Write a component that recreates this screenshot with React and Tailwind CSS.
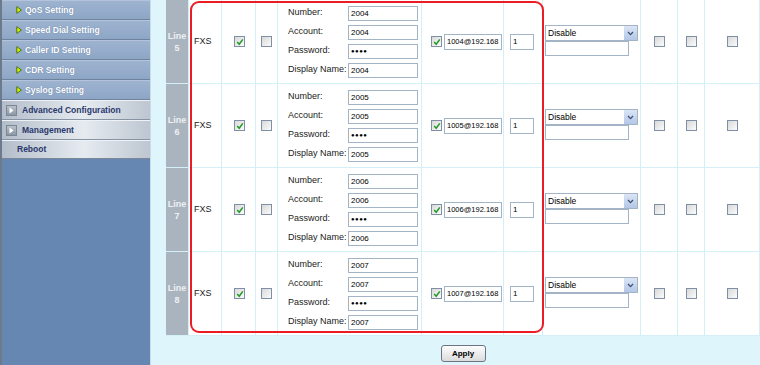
import React from 'react';

const subItems = ['QoS Setting', 'Speed Dial Setting', 'Caller ID Setting', 'CDR Setting', 'Syslog Setting'];
const lines = [5, 6, 7, 8];

function Bullet() {
  return (
    <svg width="6" height="8" viewBox="0 0 6 8" className="shrink-0">
      <path d="M0.8 0.6 L5.4 4 L0.8 7.4 Z" fill="#d6f000" stroke="#3f6b12" strokeWidth="0.9" />
    </svg>
  );
}

function FolderIcon() {
  return (
    <span className="flex h-[11px] w-[11px] shrink-0 items-center justify-center border border-[#7c8796] bg-gradient-to-b from-[#b9c1cb] to-[#8d97a4]">
      <svg width="5" height="7" viewBox="0 0 5 7">
        <path d="M0.5 0.5 L4.5 3.5 L0.5 6.5 Z" fill="#ffffff" />
      </svg>
    </span>
  );
}

function Box({ checked }) {
  return (
    <span className="flex h-[11px] w-[11px] items-center justify-center border border-[#7e8fa6] bg-gradient-to-br from-[#d9d9d9] to-[#fbfbfb]">
      {checked && (
        <svg width="8" height="8" viewBox="0 0 8 8">
          <path d="M1.2 4 L3.2 6.2 L6.8 1.4" fill="none" stroke="#1f9a22" strokeWidth="1.5" />
        </svg>
      )}
    </span>
  );
}

// plain read-only text box, password shown as dots
function Field({ value, w, h = 'h-[15px]', size = 'text-[8px]' }) {
  return (
    <input
      readOnly
      type="text"
      value={value}
      className={`${w} ${h} ${size} border border-[#a3b4c7] bg-white px-[2px] font-['Liberation_Sans',Arial,sans-serif] text-black outline-none`}
    />
  );
}

function Row({ n }) {
  const num = String(1999 + n);
  return (
    <div className="flex h-[84px] border-b border-[#d3eff8] bg-white">
      <div className="flex w-[23px] shrink-0 flex-col items-center justify-center border-r border-[#d3eff8] bg-[#aab4be] text-[9px] font-bold leading-[12px] text-[#eef1f4]">
        <span>Line</span>
        <span>{n}</span>
      </div>
      <div className="flex w-[33px] shrink-0 items-center border-r border-[#d3eff8] pl-[5px] text-[9px] text-[#222]">FXS</div>
      <div className="flex w-[34px] shrink-0 items-center justify-center border-r border-[#d3eff8] pl-[2px]">
        <Box checked />
      </div>
      <div className="flex w-[22px] shrink-0 items-center justify-center border-r border-[#d3eff8]">
        <Box />
      </div>
      <div className="flex w-[144px] shrink-0 flex-col justify-center gap-[4px] border-r border-[#d3eff8] pl-[10px] text-[9px] text-[#222]">
        {[
          ['Number:', num],
          ['Account:', num],
          ['Password:', '●●●●'],
          ['Display Name:', num],
        ].map(([label, value]) => (
          <div key={label} className="flex h-[15px] items-center">
            <span className="w-[60px] shrink-0 whitespace-nowrap">{label}</span>
            {label === 'Password:' ? (
              <Field value={value} w="w-[70px]" size="text-[6px] tracking-[0.5px]" />
            ) : (
              <Field value={value} w="w-[70px]" />
            )}
          </div>
        ))}
      </div>
      <div className="flex w-[82px] shrink-0 items-center gap-[2px] border-r border-[#d3eff8] pl-[9px]">
        <Box checked />
        <Field value={`100${n - 1}@192.168.`} w="w-[58px] px-[1px]" h="h-[16px]" size="text-[7.5px]" />
      </div>
      <div className="flex w-[39px] shrink-0 items-center border-r border-[#d3eff8] pl-[6px]">
        <Field value="1" w="w-[24px]" h="h-[16px]" />
      </div>
      <div className="flex w-[98px] shrink-0 flex-col justify-center border-r border-[#d3eff8] pl-[2px] pb-[2px]">
        <div className="flex h-[16px] w-[93px] items-center border border-[#a3b4c7] bg-white">
          <span className="flex-1 pl-[2px] text-[8.5px] text-black">Disable</span>
          <span className="flex h-full w-[13px] items-center justify-center bg-gradient-to-b from-[#dbe5f5] to-[#b4c7e6]">
            <svg width="7" height="5" viewBox="0 0 7 5">
              <path d="M1 1 L3.5 3.6 L6 1" fill="none" stroke="#3a4f78" strokeWidth="1.3" />
            </svg>
          </span>
        </div>
        <div className="h-[15px] w-[84px] border border-[#a3b4c7] bg-white" />
      </div>
      <div className="flex w-[37px] shrink-0 items-center justify-center border-r border-[#d3eff8]">
        <Box />
      </div>
      <div className="flex w-[27px] shrink-0 items-center justify-center border-r border-[#d3eff8]">
        <Box />
      </div>
      <div className="flex w-[55px] shrink-0 items-center justify-center border-r border-[#d3eff8]">
        <Box />
      </div>
    </div>
  );
}

function App() {
  return (
    <div className="flex h-[365px] w-[760px] overflow-hidden bg-[#dff5fc] font-['Liberation_Sans',Arial,sans-serif]">
      {/* left menu */}
      <aside className="flex w-[151px] shrink-0 flex-col border-l-2 border-r border-l-[#6d7a8b] border-r-[#c9dcec] bg-[#6687b1]">
        {subItems.map((item) => (
          <div
            key={item}
            className="flex h-[20px] items-center gap-[3px] border-b border-t border-b-[#6f839f] border-t-[#b3c4da] bg-gradient-to-b from-[#9db3cf] to-[#8ea6c6] pl-[14px] text-[8.5px] font-bold text-white"
          >
            <Bullet />
            <span className="[text-shadow:0_0_1px_#56709a]">{item}</span>
          </div>
        ))}
        {['Advanced Configuration', 'Management'].map((item) => (
          <div
            key={item}
            className="flex h-[20px] items-center gap-[5px] border-b border-t border-b-[#8794a4] border-t-[#eef2f6] bg-[linear-gradient(to_right,#b3bdca,#e6ebf0_55%,#bdc6d1)] pl-[4px] text-[8.5px] font-bold text-[#2a386c]"
          >
            <FolderIcon />
            <span>{item}</span>
          </div>
        ))}
        <div className="flex h-[19px] items-center border-b border-t border-b-[#7b8796] border-t-[#eef2f6] bg-[linear-gradient(to_right,#b3bdca,#e6ebf0_55%,#bdc6d1)] pl-[15px] text-[8.5px] font-bold text-[#2a386c]">
          Reboot
        </div>
      </aside>

      {/* content */}
      <main className="flex flex-col pl-[15px]">
        <div className="relative w-[594px]">
          {lines.map((n) => (
            <Row key={n} n={n} />
          ))}
          <div className="pointer-events-none absolute left-[24px] top-[1px] h-[332px] w-[354px] rounded-[9px] border-2 border-[#ec1c24]" />
        </div>
        <div className="flex w-[594px] justify-center pt-[9px]">
          <button className="h-[17px] w-[45px] rounded-[3px] border border-[#6b7482] bg-gradient-to-b from-[#fdfdfd] to-[#dcdcdc] text-[8px] font-bold text-black">
            Apply
          </button>
        </div>
      </main>
    </div>
  );
}

export default App;
